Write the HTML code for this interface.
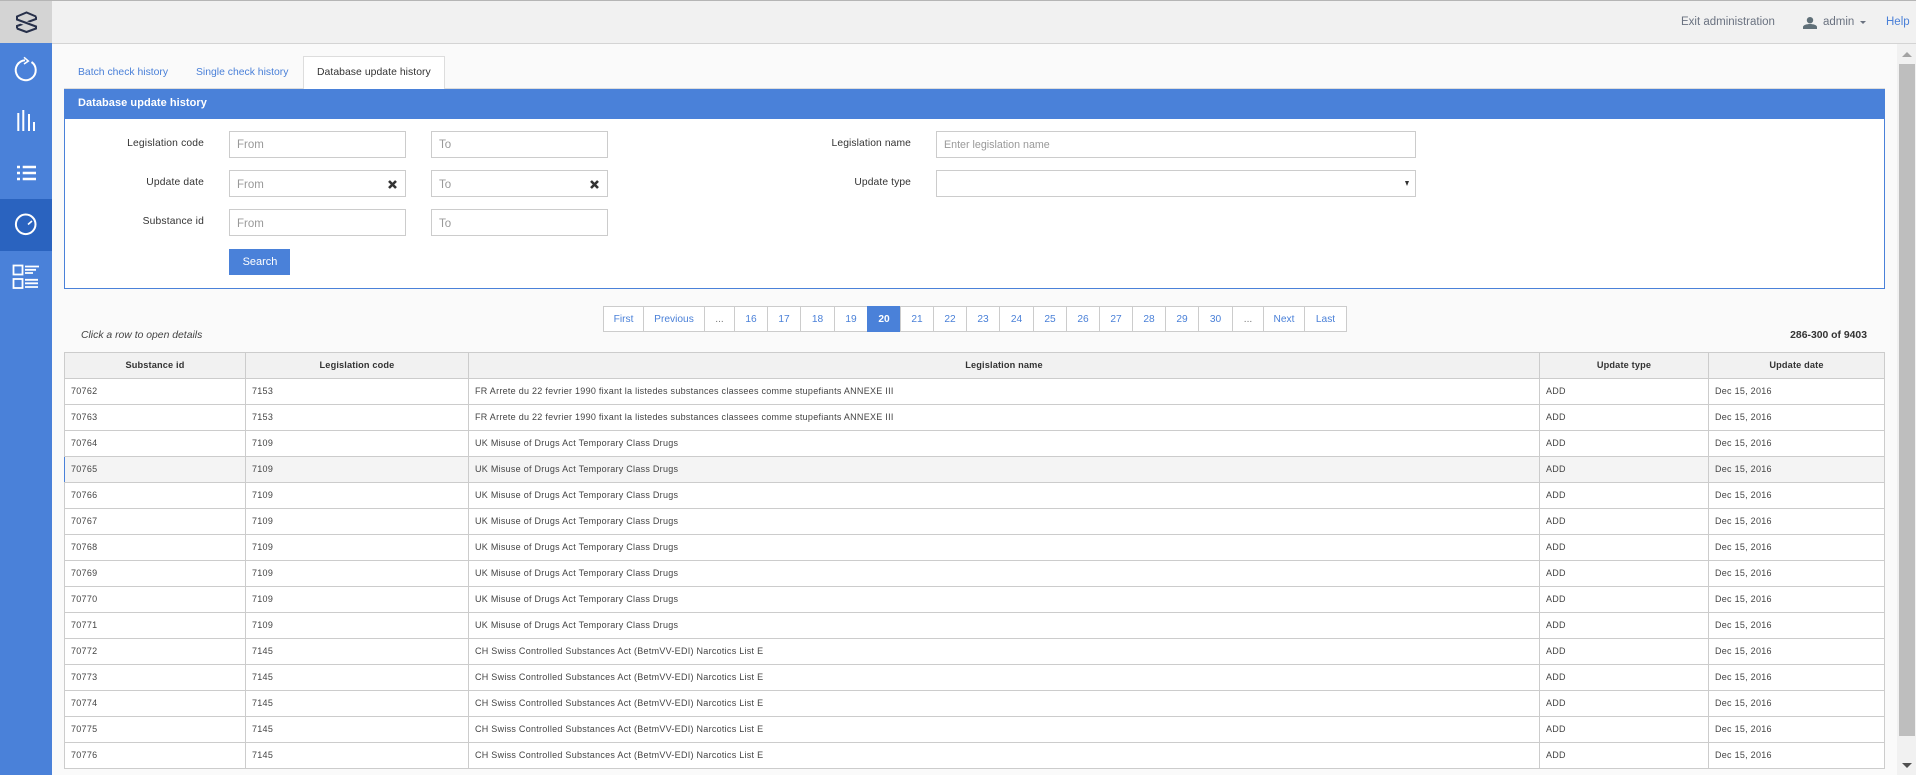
<!DOCTYPE html>
<html><head><meta charset="utf-8"><title>Database update history</title>
<style>
html,body{margin:0;padding:0;width:1916px;height:775px;overflow:hidden;background:#fafafa;font-family:"Liberation Sans",Arial,sans-serif;color:#333}
.a{position:absolute;white-space:nowrap;box-sizing:border-box}
.lbl{font-size:10.3px;letter-spacing:.15px;color:#333;text-align:right;width:120px;left:84px;line-height:14px}
.lbl.r{left:791px;letter-spacing:.1px}
.inp{background:#fff;border:1px solid #ccc;height:27px;font-size:11.5px;color:#999;padding-left:7px;line-height:26px}
.tab{font-size:10.4px;color:#4a80d8;line-height:14px}
.pg{position:absolute;top:306px;height:26px;box-sizing:border-box;border:1px solid #ccc;background:#fff;color:#4a80d8;font-size:10.2px;line-height:26px;text-align:center;margin-right:-1px}
table{position:absolute;left:64px;top:352px;width:1820px;border-collapse:collapse;table-layout:fixed;background:#fff;font-size:9px;color:#444}
th,td{border:1px solid #ccc;padding:0 0 2px 6px;box-sizing:border-box;white-space:nowrap;overflow:hidden}
td{height:26px;letter-spacing:.27px}
th{height:26px;background:#f1f1f1;font-size:9.2px;letter-spacing:.15px;text-align:center;padding:0 0 2px 0;color:#333}
tr.h td{background:#f4f4f4}
tr.h td:first-child{border-left:1px solid #4a81d9}
</style></head><body>
<div class="a" style="left:0;top:0;width:1916px;height:44px;background:#f1f1f1;border-top:1px solid #b5b5b5;border-bottom:1px solid #d4d4d4"></div>
<div class="a" style="left:0;top:1px;width:52px;height:42px;background:#d4d4d4"></div>
<svg class="a" style="left:0;top:0" width="52" height="44" viewBox="0 0 52 44" fill="none" stroke="#27304a" stroke-width="2"><path d="M36 16.500V19L17 26V28.500"/><path d="M17 20L36 27" stroke="#d4d4d4" stroke-width="4.500"/><path d="M36 16.500L26.500 12.500L17 16.500V19.500L36 26.500V28.500L26.500 32L17 28.500"/></svg>
<div class="a" style="left:0;top:43px;width:52px;height:732px;background:#4a81d9"></div>
<div class="a" style="left:0;top:199px;width:52px;height:52px;background:#2a63bf"></div>
<svg class="a" style="left:0;top:43px" width="52" height="250" viewBox="0 0 52 250" fill="none" stroke="#fff" stroke-width="2">
<path d="M31.500 19A10 10 0 1 1 25 17.200"/><path d="M24 14.300L28.300 18L24 21" stroke-width="1.600"/>
<path d="M18.300 88V70M23.300 88V67M29 88V71M34 88V79"/>
<path d="M17 124h3M22.700 124H36M17 130h3M22.700 130H36M17 136h3M22.700 136H36" stroke-width="2.400"/>
<circle cx="25.700" cy="181.300" r="9.800"/><path d="M28 181.500L32 178" stroke-width="1.600"/>
<rect x="13.500" y="222.500" width="9" height="9" stroke-width="1.800"/><rect x="13.500" y="236" width="9" height="9" stroke-width="1.800"/>
<path d="M25 223.500h14M25 226.800h11M25 230h8M25 236.800h13M25 240.300h13M25 244h13" stroke-width="1.800"/>
</svg>
<div class="a" style="left:1681px;top:15px;font-size:11.500px;color:#6a7280;line-height:14px">Exit administration</div>
<svg class="a" style="left:1803px;top:17px" width="14" height="12" viewBox="0 0 14 12" fill="#607078"><circle cx="7" cy="3.200" r="3.200"/><path d="M0 12V10C0 8 4 7 7 7S14 8 14 10V12Z"/></svg>
<div class="a" style="left:1823px;top:15px;font-size:11.500px;color:#6a7280;line-height:14px">admin</div>
<div class="a" style="left:1860px;top:21px;width:0;height:0;border:3px solid transparent;border-top:3px solid #6a7280"></div>
<div class="a" style="left:1886px;top:15px;font-size:11.500px;color:#4a80d8;line-height:14px">Help</div>

<div class="a" style="left:1897px;top:44px;width:19px;height:731px;background:#f1f1f1"></div>
<div class="a" style="left:1899px;top:64px;width:16px;height:672px;background:#bebebe"></div>
<div class="a" style="left:1902px;top:52px;width:0;height:0;border-left:5px solid transparent;border-right:5px solid transparent;border-bottom:5px solid #a3a3a3"></div>
<div class="a" style="left:1902px;top:763px;width:0;height:0;border-left:5px solid transparent;border-right:5px solid transparent;border-top:5px solid #505050"></div>

<div class="a" style="left:64px;top:88px;width:1821px;height:1px;background:#ddd"></div>
<div class="a tab" style="left:78px;top:66px">Batch check history</div>
<div class="a tab" style="left:196px;top:66px">Single check history</div>
<div class="a" style="left:303px;top:56px;width:142px;height:33px;background:#fff;border:1px solid #ddd;border-bottom:0"></div>
<div class="a tab" style="left:317px;top:66px;color:#333;letter-spacing:.05px">Database update history</div>

<div class="a" style="left:64px;top:89px;width:1821px;height:200px;background:#fff;border:1px solid #4a81d9"></div>
<div class="a" style="left:64px;top:89px;width:1821px;height:30px;background:#4a81d9;color:#fff;font-weight:bold;font-size:11px;letter-spacing:.05px;line-height:29px;padding-left:14px">Database update history</div>

<div class="a lbl" style="top:137px">Legislation code</div>
<div class="a lbl" style="top:176px">Update date</div>
<div class="a lbl" style="top:215px">Substance id</div>
<div class="a inp" style="left:229px;top:131px;width:177px">From</div>
<div class="a inp" style="left:431px;top:131px;width:177px">To</div>
<div class="a inp" style="left:229px;top:170px;width:177px;line-height:28px">From</div>
<div class="a inp" style="left:431px;top:170px;width:177px;line-height:28px">To</div>
<div class="a inp" style="left:229px;top:209px;width:177px;line-height:28px">From</div>
<div class="a inp" style="left:431px;top:209px;width:177px;line-height:28px">To</div>
<svg class="a" style="left:388px;top:180px" width="9" height="9" viewBox="0 0 9 9" stroke="#333" stroke-width="2.600"><path d="M1 1L8 8M8 1L1 8"/></svg>
<svg class="a" style="left:590px;top:180px" width="9" height="9" viewBox="0 0 9 9" stroke="#333" stroke-width="2.600"><path d="M1 1L8 8M8 1L1 8"/></svg>
<div class="a" style="left:229px;top:249px;width:61px;height:26px;background:#4a81d9;color:#fff;font-size:11px;line-height:27px;text-align:center;padding-left:1px">Search</div>

<div class="a lbl r" style="top:137px">Legislation name</div>
<div class="a lbl r" style="top:176px">Update type</div>
<div class="a inp" style="left:936px;top:131px;width:480px;font-size:10.700px">Enter legislation name</div>
<div class="a inp" style="left:936px;top:170px;width:480px"></div>
<div class="a" style="left:1405px;top:181px;width:0;height:0;border-left:2.500px solid transparent;border-right:2.500px solid transparent;border-top:5px solid #333"></div>

<div class="pg" style="left:603px;width:41px">First</div>
<div class="pg" style="left:643px;width:62px">Previous</div>
<div class="pg" style="left:704px;width:31px;color:#777">...</div>
<div class="pg" style="left:734px;width:34px">16</div>
<div class="pg" style="left:767px;width:34px">17</div>
<div class="pg" style="left:800px;width:35px">18</div>
<div class="pg" style="left:834px;width:34px">19</div>
<div class="pg" style="left:867px;width:34px;background:#4a81d9;border-color:#4a81d9;color:#fff;font-weight:bold">20</div>
<div class="pg" style="left:900px;width:34px">21</div>
<div class="pg" style="left:933px;width:34px">22</div>
<div class="pg" style="left:966px;width:34px">23</div>
<div class="pg" style="left:999px;width:35px">24</div>
<div class="pg" style="left:1033px;width:34px">25</div>
<div class="pg" style="left:1066px;width:34px">26</div>
<div class="pg" style="left:1099px;width:34px">27</div>
<div class="pg" style="left:1132px;width:34px">28</div>
<div class="pg" style="left:1165px;width:34px">29</div>
<div class="pg" style="left:1198px;width:35px">30</div>
<div class="pg" style="left:1232px;width:32px;color:#777">...</div>
<div class="pg" style="left:1263px;width:42px">Next</div>
<div class="pg" style="left:1304px;width:43px">Last</div>

<div class="a" style="left:81px;top:329px;font-size:10.400px;font-style:italic;color:#444;line-height:14px">Click a row to open details</div>
<div class="a" style="right:49px;top:329px;font-size:10.400px;font-weight:bold;color:#333;line-height:14px">286-300 of 9403</div>

<table>
<colgroup><col style="width:181px"><col style="width:223px"><col style="width:1071px"><col style="width:169px"><col style="width:176px"></colgroup>
<tr><th>Substance id</th><th>Legislation code</th><th>Legislation name</th><th>Update type</th><th>Update date</th></tr>
<tr><td>70762</td><td>7153</td><td>FR Arrete du 22 fevrier 1990 fixant la listedes substances classees comme stupefiants ANNEXE III</td><td>ADD</td><td>Dec 15, 2016</td></tr>
<tr><td>70763</td><td>7153</td><td>FR Arrete du 22 fevrier 1990 fixant la listedes substances classees comme stupefiants ANNEXE III</td><td>ADD</td><td>Dec 15, 2016</td></tr>
<tr><td>70764</td><td>7109</td><td>UK Misuse of Drugs Act Temporary Class Drugs</td><td>ADD</td><td>Dec 15, 2016</td></tr>
<tr class="h"><td>70765</td><td>7109</td><td>UK Misuse of Drugs Act Temporary Class Drugs</td><td>ADD</td><td>Dec 15, 2016</td></tr>
<tr><td>70766</td><td>7109</td><td>UK Misuse of Drugs Act Temporary Class Drugs</td><td>ADD</td><td>Dec 15, 2016</td></tr>
<tr><td>70767</td><td>7109</td><td>UK Misuse of Drugs Act Temporary Class Drugs</td><td>ADD</td><td>Dec 15, 2016</td></tr>
<tr><td>70768</td><td>7109</td><td>UK Misuse of Drugs Act Temporary Class Drugs</td><td>ADD</td><td>Dec 15, 2016</td></tr>
<tr><td>70769</td><td>7109</td><td>UK Misuse of Drugs Act Temporary Class Drugs</td><td>ADD</td><td>Dec 15, 2016</td></tr>
<tr><td>70770</td><td>7109</td><td>UK Misuse of Drugs Act Temporary Class Drugs</td><td>ADD</td><td>Dec 15, 2016</td></tr>
<tr><td>70771</td><td>7109</td><td>UK Misuse of Drugs Act Temporary Class Drugs</td><td>ADD</td><td>Dec 15, 2016</td></tr>
<tr><td>70772</td><td>7145</td><td>CH Swiss Controlled Substances Act (BetmVV-EDI) Narcotics List E</td><td>ADD</td><td>Dec 15, 2016</td></tr>
<tr><td>70773</td><td>7145</td><td>CH Swiss Controlled Substances Act (BetmVV-EDI) Narcotics List E</td><td>ADD</td><td>Dec 15, 2016</td></tr>
<tr><td>70774</td><td>7145</td><td>CH Swiss Controlled Substances Act (BetmVV-EDI) Narcotics List E</td><td>ADD</td><td>Dec 15, 2016</td></tr>
<tr><td>70775</td><td>7145</td><td>CH Swiss Controlled Substances Act (BetmVV-EDI) Narcotics List E</td><td>ADD</td><td>Dec 15, 2016</td></tr>
<tr><td>70776</td><td>7145</td><td>CH Swiss Controlled Substances Act (BetmVV-EDI) Narcotics List E</td><td>ADD</td><td>Dec 15, 2016</td></tr>
</table>
</body></html>
